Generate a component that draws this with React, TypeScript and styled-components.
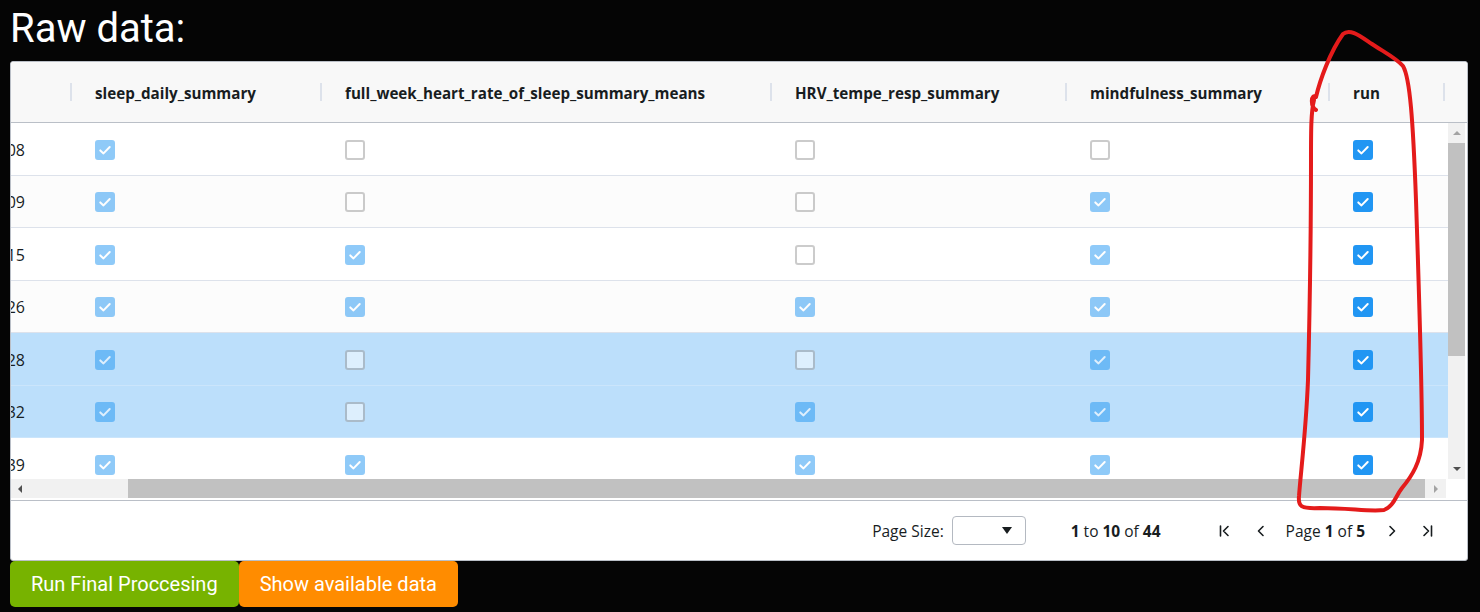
import React from "react";
import styled, { createGlobalStyle, css } from "styled-components";

const GlobalStyle = createGlobalStyle`
  html, body { margin: 0; padding: 0; background: #050505; }
  body { font-family: "Open Sans", "Noto Sans", sans-serif; color: #181d1f; }
  * { box-sizing: border-box; }
`;

const Page = styled.div`
  position: relative;
  width: 1480px;
  height: 612px;
  padding: 0 12px 0 10px;
  overflow: hidden;
`;

const Title = styled.h1`
  margin: 0;
  height: 61px;
  padding-top: 5px;
  font-family: Roboto, sans-serif;
  font-weight: 400;
  font-size: 40px;
  line-height: 47px;
  color: #ffffff;
`;

const Grid = styled.div`
  width: 1458px;
  height: 500px;
  border: 1px solid #babfc7;
  border-radius: 3px;
  background: #ffffff;
  display: flex;
  flex-direction: column;
  overflow: hidden;
`;

const Header = styled.div`
  display: flex;
  flex-shrink: 0;
  height: 61px;
  background: #f8f8f8;
  border-bottom: 1px solid #babfc7;
  overflow: hidden;
`;

const HeaderCell = styled.div<{ $w: number }>`
  position: relative;
  flex-shrink: 0;
  width: ${(p) => p.$w}px;
  padding-left: 23px;
  padding-top: 2px;
  display: flex;
  align-items: center;
  font-weight: 700;
  font-size: 15.2px;
  color: #181d1f;
  white-space: nowrap;
  &::after {
    content: "";
    position: absolute;
    right: 0;
    top: 50%;
    transform: translateY(-50%);
    width: 2px;
    height: 18px;
    background: #dde2eb;
  }
`;

const Body = styled.div`
  display: flex;
  height: 356px;
  flex-shrink: 0;
`;

const Viewport = styled.div`
  width: 1437px;
  flex-shrink: 0;
  overflow: hidden;
`;

const Row = styled.div<{ $variant: "even" | "odd" | "selected" }>`
  display: flex;
  height: 52.5px;
  border-bottom: 1px solid #dde2eb;
  background: #ffffff;
  ${(p) =>
    p.$variant === "odd" &&
    css`
      background: #fcfcfc;
    `}
  ${(p) =>
    p.$variant === "selected" &&
    css`
      background: #bcdffb;
      border-bottom-color: #cbe5fb;
    `}
`;

const Cell = styled.div<{ $w: number }>`
  flex-shrink: 0;
  width: ${(p) => p.$w}px;
  padding-left: 23px;
  padding-top: 2px;
  display: flex;
  align-items: center;
`;

const IdCell = styled.div`
  flex-shrink: 0;
  width: 61px;
  padding-right: 47px;
  padding-top: 2px;
  display: flex;
  align-items: center;
  justify-content: flex-end;
  overflow: hidden;
  white-space: nowrap;
  font-size: 16px;
  color: #181d1f;
`;

const Box = styled.span<{ $checked: boolean; $disabled: boolean }>`
  width: 20px;
  height: 20px;
  border-radius: 3px;
  display: flex;
  align-items: center;
  justify-content: center;
  background: ${(p) => (p.$checked ? "#2196f3" : "#ffffff")};
  border: 2px solid ${(p) => (p.$checked ? "#2196f3" : "#999999")};
  opacity: ${(p) => (p.$disabled ? 0.5 : 1)};
`;

const VScroll = styled.div`
  width: 17px;
  flex-shrink: 0;
  background: #f1f1f1;
  display: flex;
  flex-direction: column;
`;

const ArrowBtn = styled.div<{ $h: number; $w?: number }>`
  height: ${(p) => p.$h}px;
  width: ${(p) => (p.$w ? `${p.$w}px` : "100%")};
  flex-shrink: 0;
  display: flex;
  align-items: center;
  justify-content: center;
`;

const VThumb = styled.div`
  height: 213px;
  flex-shrink: 0;
  background: #c1c1c1;
`;

const Spacer = styled.div`
  flex: 1;
`;

const HScrollRow = styled.div`
  height: 21px;
  flex-shrink: 0;
  display: flex;
  align-items: flex-start;
`;

const HTrack = styled.div`
  width: 1435px;
  height: 19px;
  background: #f1f1f1;
  display: flex;
`;

const HGap = styled.div`
  width: 100px;
  flex-shrink: 0;
`;

const HThumb = styled.div`
  flex: 1;
  background: #c1c1c1;
`;

const Paging = styled.div`
  flex: 1;
  border-top: 1px solid #babfc7;
  display: flex;
  align-items: center;
  justify-content: flex-end;
  padding-right: 32px;
  font-size: 15.5px;
  color: #181d1f;
`;

const PageSize = styled.div`
  display: flex;
  align-items: center;
  gap: 8px;
`;

const Select = styled.div`
  width: 74px;
  height: 29px;
  border: 1px solid #b4b9c1;
  border-radius: 4px;
  background: #fff;
  display: flex;
  align-items: center;
  justify-content: flex-end;
  padding-right: 13px;
`;

const Summary = styled.div`
  margin-left: 45px;
  b { font-weight: 700; }
`;

const Nav = styled.div`
  margin-left: 56px;
  display: flex;
  align-items: center;
`;

const NavBtn = styled.div<{ $ml: number }>`
  width: 16px;
  height: 16px;
  margin-left: ${(p) => p.$ml}px;
  display: flex;
  align-items: center;
  justify-content: center;
`;

const PageText = styled.span`
  margin-left: 17px;
  b { font-weight: 700; }
`;

const Actions = styled.div`
  display: flex;
`;

const ActionButton = styled.button<{ $tone: "green" | "orange" }>`
  height: 46px;
  padding: 0 21px;
  border: none;
  border-radius: 5px;
  font-family: Roboto, sans-serif;
  font-size: 20px;
  color: #ffffff;
  background: ${(p) => (p.$tone === "green" ? "#77b300" : "#ff8c00")};
  cursor: pointer;
`;

const Annotation = styled.svg`
  position: absolute;
  left: 0;
  top: 0;
  pointer-events: none;
`;

const COLS = [
  { name: "sleep_daily_summary", w: 250 },
  { name: "full_week_heart_rate_of_sleep_summary_means", w: 450 },
  { name: "HRV_tempe_resp_summary", w: 295 },
  { name: "mindfulness_summary", w: 263 },
  { name: "run", w: 115 },
];

type RowData = { id: string; c: number[]; sel?: boolean };

const ROWS: RowData[] = [
  { id: "P0108", c: [1, 0, 0, 0, 1] },
  { id: "P0109", c: [1, 0, 0, 1, 1] },
  { id: "P0115", c: [1, 1, 0, 1, 1] },
  { id: "P0126", c: [1, 1, 1, 1, 1] },
  { id: "P0128", c: [1, 0, 0, 1, 1], sel: true },
  { id: "P0132", c: [1, 0, 1, 1, 1], sel: true },
  { id: "P0139", c: [1, 1, 1, 1, 1] },
];

function Checkbox({ checked, disabled }: { checked: boolean; disabled: boolean }) {
  return (
    <Box $checked={checked} $disabled={disabled}>
      {checked && (
        <svg width="16" height="16" viewBox="0 0 16 16">
          <path d="M3.3 8.4 L6.5 11.4 L12.7 5" fill="none" stroke="#fff" strokeWidth="2" strokeLinecap="round" strokeLinejoin="round" />
        </svg>
      )}
    </Box>
  );
}

const Tri = ({ dir, color }: { dir: "up" | "down" | "left" | "right"; color: string }) => {
  const pts = {
    up: "0,5 4,1 8,5",
    down: "0,1 8,1 4,5",
    left: "5,0 5,8 1,4",
    right: "1,0 1,8 5,4",
  }[dir];
  const vb = dir === "up" || dir === "down" ? "0 0 8 6" : "0 0 6 8";
  const w = dir === "up" || dir === "down" ? 8 : 6;
  const h = dir === "up" || dir === "down" ? 6 : 8;
  return (
    <svg width={w} height={h} viewBox={vb}>
      <polygon points={pts} fill={color} />
    </svg>
  );
};

const NavIcon = ({ kind }: { kind: "first" | "prev" | "next" | "last" }) => {
  const d = {
    first: "M3.5 3 V13 M11 3.5 L6.5 8 L11 12.5",
    prev: "M10 3.5 L5.5 8 L10 12.5",
    next: "M6 3.5 L10.5 8 L6 12.5",
    last: "M5 3.5 L9.5 8 L5 12.5 M12.5 3 V13",
  }[kind];
  return (
    <svg width="16" height="16" viewBox="0 0 16 16">
      <path d={d} fill="none" stroke="#181d1f" strokeWidth="1.6" strokeLinecap="round" strokeLinejoin="round" />
    </svg>
  );
};

export default function App() {
  return (
    <>
      <GlobalStyle />
      <Page>
        <Title>Raw data:</Title>
        <Grid>
          <Header>
            <HeaderCell $w={61} />
            {COLS.map((c) => (
              <HeaderCell key={c.name} $w={c.w}>
                {c.name}
              </HeaderCell>
            ))}
            <HeaderCell $w={200} />
          </Header>
          <Body>
            <Viewport>
              {ROWS.map((r, i) => (
                <Row key={r.id} $variant={r.sel ? "selected" : i % 2 === 1 ? "odd" : "even"}>
                  <IdCell>{r.id}</IdCell>
                  {COLS.map((c, j) => (
                    <Cell key={c.name} $w={c.w}>
                      <Checkbox checked={r.c[j] === 1} disabled={j < 4} />
                    </Cell>
                  ))}
                </Row>
              ))}
            </Viewport>
            <VScroll>
              <ArrowBtn $h={20}>
                <Tri dir="up" color="#a3a3a3" />
              </ArrowBtn>
              <VThumb />
              <Spacer />
              <ArrowBtn $h={20}>
                <Tri dir="down" color="#505050" />
              </ArrowBtn>
            </VScroll>
          </Body>
          <HScrollRow>
            <HTrack>
              <ArrowBtn $h={19} $w={17}>
                <Tri dir="left" color="#505050" />
              </ArrowBtn>
              <HGap />
              <HThumb />
              <ArrowBtn $h={19} $w={21}>
                <Tri dir="right" color="#a3a3a3" />
              </ArrowBtn>
            </HTrack>
          </HScrollRow>
          <Paging>
            <PageSize>
              <span>Page Size:</span>
              <Select>
                <svg width="10" height="7" viewBox="0 0 10 7">
                  <polygon points="0,0 10,0 5,7" fill="#181d1f" />
                </svg>
              </Select>
            </PageSize>
            <Summary>
              <b>1</b> to <b>10</b> of <b>44</b>
            </Summary>
            <Nav>
              <NavBtn $ml={0}>
                <NavIcon kind="first" />
              </NavBtn>
              <NavBtn $ml={20}>
                <NavIcon kind="prev" />
              </NavBtn>
              <PageText>
                Page <b>1</b> of <b>5</b>
              </PageText>
              <NavBtn $ml={19}>
                <NavIcon kind="next" />
              </NavBtn>
              <NavBtn $ml={19}>
                <NavIcon kind="last" />
              </NavBtn>
            </Nav>
          </Paging>
        </Grid>
        <Actions>
          <ActionButton $tone="green">Run Final Proccesing</ActionButton>
          <ActionButton $tone="orange">Show available data</ActionButton>
        </Actions>
        <Annotation width="1480" height="612" viewBox="0 0 1480 612">
          <path
            d="M1316 110 C1310 106 1311 93 1316 97 C1320 80 1330 52 1343 34 C1350 28 1360 36 1372 44 C1384 52 1396 58 1403 66 C1410 78 1413 120 1416 200 C1419 290 1422 380 1422 440 C1421 462 1412 476 1402 488 C1395 497 1394 506 1384 510 C1370 512 1350 508 1320 508 C1300 509 1298 506 1299 496 C1301 470 1306 430 1308 380 C1310 300 1311 220 1311 160 C1311 130 1311 112 1314 100"
            fill="none"
            stroke="#e41b1b"
            strokeWidth="4"
            strokeLinecap="round"
            strokeLinejoin="round"
          />
        </Annotation>
      </Page>
    </>
  );
}
